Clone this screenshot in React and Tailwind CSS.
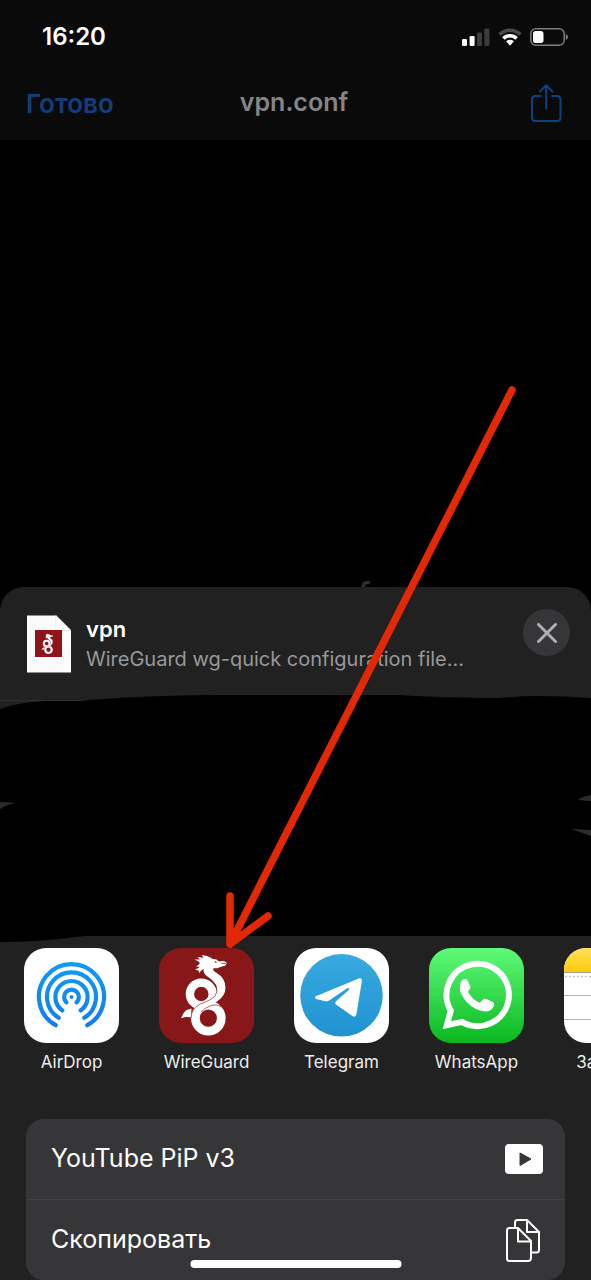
import React from "react";

function SignalIcon() {
  return (
    <svg className="h-[18px] w-7" viewBox="0 0 28 18" aria-hidden="true">
      <rect x="0" y="11" width="5" height="7" rx="1.3" fill="#fff" />
      <rect x="7.6" y="8" width="5" height="10" rx="1.3" fill="#fff" />
      <rect x="15" y="4.5" width="5" height="13.5" rx="1.3" fill="#3c3c3c" />
      <rect x="22.4" y="0.5" width="5" height="17.5" rx="1.3" fill="#3c3c3c" />
    </svg>
  );
}

function WifiIcon() {
  return (
    <svg className="h-[18px] w-6" viewBox="0 0 24 18" fill="none" aria-hidden="true">
      <path d="M1.6 6.6 A14.6 14.6 0 0 1 22.4 6.6" stroke="#4a4a4a" strokeWidth="3.6" />
      <path d="M5.4 10.5 A9.3 9.3 0 0 1 18.6 10.5" stroke="#fff" strokeWidth="3.6" />
      <path d="M8.1 13.2 Q12 10.4 15.9 13.2 L12.7 16.9 Q12 17.6 11.3 16.9 Z" fill="#fff" />
    </svg>
  );
}

function BatteryIcon() {
  return (
    <svg className="h-[18px] w-[38px]" viewBox="0 0 38 18" aria-hidden="true">
      <rect x="0.8" y="0.8" width="33.4" height="16.4" rx="5" fill="none" stroke="#7c7c7c" strokeWidth="1.5" />
      <path d="M35.8 6 Q38 7 38 9 Q38 11 35.8 12 Z" fill="#7c7c7c" />
      <rect x="3" y="3" width="10.5" height="12" rx="2.8" fill="#fff" />
    </svg>
  );
}

function ShareIcon() {
  return (
    <svg className="h-10 w-8" viewBox="0 0 32 40" fill="none" stroke="currentColor" strokeWidth="2" strokeLinecap="round" strokeLinejoin="round" aria-hidden="true">
      <path d="M10.5 13 H5.5 Q2 13 2 16.5 V34.5 Q2 38 5.5 38 H27 Q30.500 38 30.500 34.500 V16.500 Q30.500 13 27 13 H22" />
      <path d="M16.200 25.500 V2.500 M10 8.500 L16.200 2.300 L22.500 8.500" />
    </svg>
  );
}

function DragonShape() {
  return (
    <>
      <g fill="none" stroke="#fff">
        <circle cx="153" cy="341" r="34" strokeWidth="25" />
        <circle cx="174" cy="413" r="38.500" strokeWidth="26" />
      </g>
      <path
        fill="#fff"
        d="M132 238 L149 238 L142 231 L160 233 L154 225 Q174 226 187 237 Q198 236 206 244 L215 243 Q221 241 229 248 L225 256 L208 261 Q198 266 189 264 Q186 271 198 278 Q225 294 225 322 Q225 347 201 363 L165 386 L140 400 L123 411 Q123 386 151 371 Q186 356 195 345 Q203 330 196 313 Q188 300 171 289 Q157 279 160 266 Q150 271 148 280 Q148 270 134 268 Q143 266 148 260 L137 259 Q149 253 148 247 Q142 241 132 238 Z"
      />
      <path fill="#fff" d="M124 384 L109 389 Q98 397 93 413 Q108 408 122 411 Z" />
      <path
        fill="none"
        stroke="#8c1b1d"
        strokeWidth="2"
        d="M172 290 Q190 303 197 316 Q204 334 194 347 Q184 358 152 370 Q123 384 123 412 M151 395 Q162 383 183 375 Q199 370 212 379"
      />
      <path d="M193 242 L201 247 L194 247 Z" fill="#88171a" />
      <path d="M213 250 H227" stroke="#88171a" strokeWidth="2" />
    </>
  );
}

function FileIcon() {
  return (
    <svg className="h-[58px] w-11 shrink-0" viewBox="0 0 44 58" aria-hidden="true">
      <path d="M0 0.500 H29 L44 15.500 V57.500 H0 Z" fill="#fbfbfb" />
      <path d="M29 0.500 L44 15.500 H29 Z" fill="#fff" stroke="#dedede" strokeWidth="0.700" />
      <rect x="8" y="15" width="27" height="27" fill="#8f1318" />
      <svg x="9" y="17" width="24" height="24" viewBox="27 204 283 283">
        <DragonShape />
      </svg>
    </svg>
  );
}

function AirDropIcon() {
  return (
    <svg className="size-full" viewBox="26.500 24 283 283" aria-hidden="true">
      <defs>
        <linearGradient id="airdrop" gradientUnits="userSpaceOnUse" x1="0" y1="66" x2="0" y2="260">
          <stop offset="0" stopColor="#0f9df3" />
          <stop offset="1" stopColor="#147cf0" />
        </linearGradient>
      </defs>
      <rect x="26" y="24" width="284" height="284" fill="#fff" />
      <g fill="none" stroke="url(#airdrop)" strokeWidth="12.500" strokeLinecap="round">
        <path d="M121 254 A97 97 0 1 1 215 254" />
        <path d="M130 232 A73 73 0 1 1 206 232" />
        <path d="M141 210 A48 48 0 1 1 195 210" />
        <path d="M153 186 A22 22 0 1 1 183 186" />
      </g>
      <circle cx="168" cy="170" r="6" fill="#148cf1" />
    </svg>
  );
}

function WireGuardIcon() {
  return (
    <svg className="size-full" viewBox="27 204 283 283" aria-hidden="true">
      <rect x="27" y="204" width="283" height="283" fill="#88171a" />
      <DragonShape />
    </svg>
  );
}

function TelegramIcon() {
  return (
    <svg className="size-full" viewBox="28 24 283 283" aria-hidden="true">
      <defs>
        <linearGradient id="telegram" x1="0" y1="0" x2="0" y2="1">
          <stop offset="0" stopColor="#38aadf" />
          <stop offset="1" stopColor="#2092d1" />
        </linearGradient>
      </defs>
      <rect x="28" y="24" width="283" height="283" fill="#fff" />
      <circle cx="169.500" cy="165" r="123" fill="url(#telegram)" />
      <path
        fill="#fff"
        d="M93 168 L221 115 Q231 112 230 123 L214 221 Q211 233 201 226 L153 192 Q149 188 153 183 L194 147 Q190 141 185 145 L134 180 Q126 185 118 182 L94 176 Q87 172 93 168 Z"
      />
    </svg>
  );
}

function WhatsAppIcon() {
  return (
    <svg className="size-full" viewBox="29 24 283 283" aria-hidden="true">
      <defs>
        <linearGradient id="whatsapp" x1="0" y1="0" x2="0" y2="1">
          <stop offset="0" stopColor="#5ffa78" />
          <stop offset="1" stopColor="#09b820" />
        </linearGradient>
      </defs>
      <rect x="29" y="24" width="283" height="283" fill="url(#whatsapp)" />
      <path
        d="M82 254 L94 211 A93 93 0 1 1 127 244 Z"
        fill="none"
        stroke="#fff"
        strokeWidth="18"
      />
      <path
        fill="#fff"
        d="M128 120 Q136 113 143 119 L152 138 Q154 143 150 147 L145 154 Q158 178 181 187 L190 177 Q194 173 200 176 L219 185 Q225 188 223 195 Q216 213 196 213 Q165 210 141 185 Q120 160 121 142 Q121 127 128 120 Z"
      />
    </svg>
  );
}

function NotesIcon() {
  return (
    <svg className="size-full" viewBox="0 0 95 95" aria-hidden="true">
      <defs>
        <linearGradient id="notes" x1="0" y1="0" x2="0" y2="1">
          <stop offset="0" stopColor="#ffdf5a" />
          <stop offset="1" stopColor="#fdcb07" />
        </linearGradient>
      </defs>
      <rect width="95" height="95" fill="#fff" />
      <rect width="95" height="24" fill="url(#notes)" />
      <path d="M0 24.500 H95" stroke="#aaa08a" strokeWidth="1.200" />
      <path d="M1 28.500 H95" stroke="#b4b4b4" strokeWidth="1.600" strokeDasharray="1.600 2.400" />
      <path d="M0 47.500 H95 M0 71.500 H95" stroke="#b3b3b3" strokeWidth="1.200" />
    </svg>
  );
}

function PlayBoxIcon() {
  return (
    <svg className="h-[30px] w-[38px]" viewBox="0 0 38 30" aria-hidden="true">
      <rect width="38" height="30" rx="4" fill="#fff" />
      <path d="M15 9 L26 15 L15 21.500 Z" fill="#363638" stroke="#363638" strokeWidth="1" strokeLinejoin="round" />
    </svg>
  );
}

function CopyIcon() {
  return (
    <svg className="mr-0.5 h-11 w-9" viewBox="0 0 36 44" fill="none" stroke="#fff" strokeWidth="2" strokeLinejoin="round" aria-hidden="true">
      <path d="M10 9.500 V4.500 Q10 2 12.500 2 H22 L34 14 V32 Q34 34.500 31.500 34.500 H27 M22 2 V14 H34" />
      <path d="M4.500 10 H13 L26 23 V40 Q26 43 23 43 H4.500 Q2 43 2 40.500 V12.500 Q2 10 4.500 10 Z M13 10 V23.500 H26" />
    </svg>
  );
}

const apps = [
  { name: "AirDrop", Icon: AirDropIcon },
  { name: "WireGuard", Icon: WireGuardIcon },
  { name: "Telegram", Icon: TelegramIcon },
  { name: "WhatsApp", Icon: WhatsAppIcon },
  { name: "Заметки", Icon: NotesIcon },
];

const actions = [
  { name: "YouTube PiP v3", Icon: PlayBoxIcon },
  { name: "Скопировать", Icon: CopyIcon },
];

export default function App() {
  return (
    <div className="relative overflow-hidden bg-black font-['Inter','Liberation_Sans',sans-serif] text-white">
      <header className="bg-[#0a0a0a]">
        <div className="flex h-[74px] items-center justify-between pr-[23px] pl-[42px]">
          <time className="text-2xl font-semibold">16:20</time>
          <div className="flex items-center gap-2">
            <SignalIcon />
            <WifiIcon />
            <BatteryIcon />
          </div>
        </div>
        <div className="grid h-[66px] grid-cols-3 items-center pr-[29px] pb-2 pl-[26px]">
          <button className="justify-self-start text-[26px] font-semibold text-[#123f7c]">Готово</button>
          <h1 className="justify-self-center text-[25px] font-semibold text-[#858585]">vpn.conf</h1>
          <button className="justify-self-end text-[#0d4280]" aria-label="Поделиться">
            <ShareIcon />
          </button>
        </div>
      </header>

      <main className="flex h-[447px] items-end justify-center overflow-hidden bg-black">
        <p className="-mb-9 text-4xl leading-[54px] text-[#303030]">vpn.conf</p>
      </main>

      <section className="rounded-t-3xl bg-[#212121]">
        <div className="flex h-[114px] items-center gap-[15px] border-b border-[#303030] pr-[21px] pl-[27px]">
          <FileIcon />
          <div className="min-w-0 flex-1">
            <h2 className="text-[22px] leading-[30px] font-semibold">vpn</h2>
            <p className="truncate text-xl leading-[30px] text-[#98989b]">WireGuard wg-quick configuration file...</p>
          </div>
          <button className="mb-[22px] flex size-[47px] items-center justify-center rounded-full bg-[#363638]" aria-label="Закрыть">
            <svg className="size-5" viewBox="0 0 20 20" stroke="#aeaeb2" strokeWidth="3" strokeLinecap="round" aria-hidden="true">
              <path d="M1.500 1.500 L18.500 18.500 M18.500 1.500 L1.500 18.500" />
            </svg>
          </button>
        </div>

        <div className="relative h-[247px]">
          <svg className="absolute -top-2 left-0 h-[252px] w-full" viewBox="0 0 591 252" preserveAspectRatio="none" aria-hidden="true">
            <path
              d="M0 16 Q20 9 45 8 L80 8 Q130 3 215 2 L400 2 Q440 5 500 5 Q535 1 591 5 V102 Q584 103 578 106 L591 108 V141 Q580 138 571 136 Q580 138 591 143 V243 H85 Q40 249 0 249 V116 Q4 112 14 110 L0 109 Z"
            />
            <path d="M0 109 L15 110 Q5 112 0 116 Z M591 102 Q584 103 578 107 L591 108 Z M571 136 L591 137 V143 Z" fill="#2b2b2b" />
          </svg>
        </div>

        <ul className="flex gap-10 overflow-hidden pl-6">
          {apps.map(({ name, Icon }) => (
            <li key={name} className="w-[95px] shrink-0">
              <button className="flex w-full flex-col items-center gap-1.5">
                <span className="block size-[95px] overflow-hidden rounded-[22px]">
                  <Icon />
                </span>
                <span className="text-[17px] leading-[26px] whitespace-nowrap text-[#ececec]">{name}</span>
              </button>
            </li>
          ))}
        </ul>

        <ul className="mx-[26px] mt-11 divide-y divide-[#414143] rounded-[18px] bg-[#363638]">
          {actions.map(({ name, Icon }) => (
            <li key={name}>
              <button className="flex h-20 w-full items-center justify-between pr-[22px] pl-[25px] text-left text-[25px]">
                {name}
                <Icon />
              </button>
            </li>
          ))}
        </ul>
      </section>

      <svg className="pointer-events-none absolute top-[380px] left-[220px] h-[580px] w-[300px]" viewBox="220 380 300 580" fill="none" stroke="#e32805" strokeWidth="7.500" strokeLinecap="round" strokeLinejoin="round" aria-hidden="true">
        <path d="M512 390 L230 944 M230 896 L230 944 L268 916" />
      </svg>
      <div className="absolute bottom-3 left-1/2 h-2 w-[211px] -translate-x-1/2 rounded-full bg-white" />
    </div>
  );
}
